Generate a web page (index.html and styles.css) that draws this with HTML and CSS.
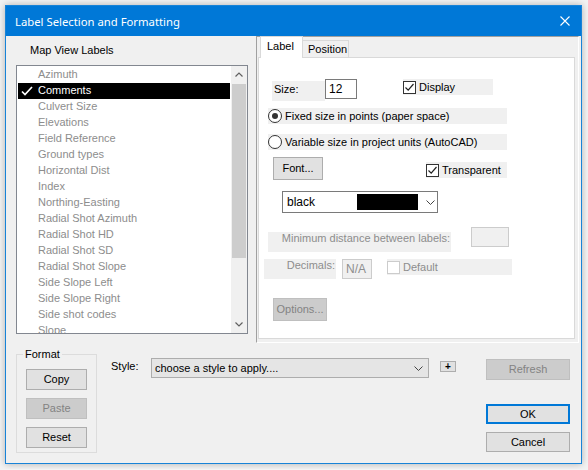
FILE: index.html
```html
<!DOCTYPE html>
<html lang="en">
<head>
  <meta charset="UTF-8">
  <title>Label Selection and Formatting</title>
  <link rel="stylesheet" href="styles.css">
</head>
<body>

<div class="window">
  <div class="titlebar">
    <span class="title">Label Selection and Formatting</span>
    <svg class="close" width="10" height="10" viewBox="0 0 10 10"><path d="M0.5 0.5L9.5 9.5M9.5 0.5L0.5 9.5" stroke="#fff" stroke-width="1.1"/></svg>
  </div>

  <div class="client">
    <div class="top">
      <div class="labels-col">
        <div class="caption">Map View Labels</div>
        <div class="listbox">
          <div class="items">
            <div class="item">Azimuth</div>
            <div class="item selected">
              <svg class="tick" width="12" height="10" viewBox="0 0 12 10"><path d="M1 5.5L4 8.5L11 1" fill="none" stroke="#fff" stroke-width="1.7"/></svg>
              Comments
            </div>
            <div class="item">Culvert Size</div>
            <div class="item">Elevations</div>
            <div class="item">Field Reference</div>
            <div class="item">Ground types</div>
            <div class="item">Horizontal Dist</div>
            <div class="item">Index</div>
            <div class="item">Northing-Easting</div>
            <div class="item">Radial Shot Azimuth</div>
            <div class="item">Radial Shot HD</div>
            <div class="item">Radial Shot SD</div>
            <div class="item">Radial Shot Slope</div>
            <div class="item">Side Slope Left</div>
            <div class="item">Side Slope Right</div>
            <div class="item">Side shot codes</div>
            <div class="item">Slope</div>
          </div>
          <div class="vscroll">
            <div class="arrow">
              <svg width="8" height="5" viewBox="0 0 8 5"><path d="M0.5 4.5L4 1L7.5 4.5" fill="none" stroke="#606060" stroke-width="1.2"/></svg>
            </div>
            <div class="track"><div class="thumb"></div></div>
            <div class="arrow">
              <svg width="8" height="5" viewBox="0 0 8 5"><path d="M0.5 0.5L4 4L7.5 0.5" fill="none" stroke="#606060" stroke-width="1.2"/></svg>
            </div>
          </div>
        </div>
      </div>

      <div class="tabpanel">
        <div class="tabs">
          <div class="tab active">Label</div>
          <div class="tab">Position</div>
        </div>
        <div class="page">
          <div class="row row-size">
            <div class="lbl size-lbl">Size:</div>
            <div class="textbox size-box">12</div>
            <div class="chk display-chk">
              <span class="box"><svg width="11" height="11" viewBox="0 0 11 11"><path d="M1.5 5.5L4.2 8.2L9.5 2" fill="none" stroke="#222" stroke-width="1.2"/></svg></span>
              Display
            </div>
          </div>
          <div class="row">
            <div class="radio-row"><span class="radio on"></span>Fixed size in points (paper space)</div>
          </div>
          <div class="row row-radio2">
            <div class="radio-row"><span class="radio"></span>Variable size in project units (AutoCAD)</div>
          </div>
          <div class="row row-font">
            <div class="btn font-btn">Font...</div>
            <div class="chk transparent-chk">
              <span class="box"><svg width="11" height="11" viewBox="0 0 11 11"><path d="M1.5 5.5L4.2 8.2L9.5 2" fill="none" stroke="#222" stroke-width="1.2"/></svg></span>
              Transparent
            </div>
          </div>
          <div class="row row-color">
            <div class="combo color-combo">
              <span class="color-name">black</span>
              <span class="swatch"></span>
              <svg class="chev" width="9" height="5" viewBox="0 0 9 5"><path d="M0.5 0.5L4.5 4.5L8.5 0.5" fill="none" stroke="#444" stroke-width="1"/></svg>
            </div>
          </div>
          <div class="row row-dist">
            <div class="lbl off dist-lbl">Minimum distance between labels:</div>
            <div class="textbox off dist-box"></div>
          </div>
          <div class="row row-dec">
            <div class="lbl off dec-lbl">Decimals:</div>
            <div class="textbox off na-box">N/A</div>
            <div class="chk off default-chk"><span class="box"></span>Default</div>
          </div>
          <div class="row row-options">
            <div class="btn disabled options-btn">Options...</div>
          </div>
        </div>
      </div>
    </div>

    <div class="bottom">
      <fieldset class="format">
        <legend>Format</legend>
        <div class="btn">Copy</div>
        <div class="btn disabled">Paste</div>
        <div class="btn">Reset</div>
      </fieldset>

      <div class="style-row">
        <div class="style-lbl">Style:</div>
        <div class="combo style-combo">
          <span>choose a style to apply....</span>
          <svg class="chev" width="9" height="5" viewBox="0 0 9 5"><path d="M0.5 0.5L4.5 4.5L8.5 0.5" fill="none" stroke="#444" stroke-width="1"/></svg>
        </div>
        <div class="plus-btn">+</div>
      </div>

      <div class="actions">
        <div class="btn disabled refresh-btn">Refresh</div>
        <div class="btn default ok-btn">OK</div>
        <div class="btn cancel-btn">Cancel</div>
      </div>
    </div>
  </div>
</div>

</body>
</html>
```

FILE: styles.css
```css
body {
  margin: 0;
  padding: 5px;
  background-color: #f3f3f3;
  font-family: "Liberation Sans", Arial, sans-serif;
  font-size: 11px;
  line-height: 13px;
  color: #000;
}

.window {
  width: 577px;
  height: 459px;
  box-sizing: border-box;
  border: 1px solid #1883d7;
  background-color: #f0f0f0;
  box-shadow: 0 0 7px rgba(0, 0, 0, 0.28);
  display: flex;
  flex-direction: column;
}

.titlebar {
  height: 30px;
  flex: none;
  background-color: #0078d7;
  color: #fff;
  display: flex;
  align-items: center;
  justify-content: space-between;
  padding: 0 10px 0 9px;
}

.title {
  font-family: "Noto Sans", sans-serif;
  font-size: 11.3px;
  line-height: 16px;
  margin-top: 1px;
}

.close {
  margin-right: 1px;
}

.client {
  flex: 1;
  display: flex;
  flex-direction: column;
}

/* ---- top half ---- */

.top {
  display: flex;
  height: 307px;
}

.labels-col {
  margin-left: 10px;
  width: 232px;
}

.caption {
  margin-top: 8px;
  padding-left: 14px;
}

.listbox {
  margin-top: 8px;
  height: 269px;
  box-sizing: border-box;
  border: 1px solid #828790;
  background-color: #fff;
  display: flex;
  overflow: hidden;
}

.items {
  flex: 1;
  padding: 1px 0 0 1px;
}

.item {
  height: 16px;
  line-height: 15px;
  padding-left: 20px;
  color: #8d8d8d;
  white-space: nowrap;
  position: relative;
}

.item.selected {
  background-color: #000;
  color: #fff;
}

.tick {
  position: absolute;
  left: 3px;
  top: 3px;
}

.vscroll {
  width: 16px;
  margin-left: 1px;
  background-color: #f0f0f0;
  display: flex;
  flex-direction: column;
}

.arrow {
  height: 17px;
  display: flex;
  align-items: center;
  justify-content: center;
}

.track {
  flex: 1;
  padding: 1px 1px;
}

.thumb {
  height: 174px;
  background-color: #cdcdcd;
}

.tabpanel {
  margin-left: 8px;
  width: 323px;
  box-sizing: border-box;
  border-top: 1px solid #a0a0a0;
  border-left: 1px solid #a0a0a0;
  border-right: 1px solid #fff;
  border-bottom: 1px solid #fff;
  display: flex;
  flex-direction: column;
}

.tabs {
  display: flex;
  align-items: flex-end;
  height: 21px;
  padding-left: 3px;
  margin-bottom: -1px;
}

.tab {
  width: 47px;
  height: 18px;
  box-sizing: border-box;
  padding: 2px 0 0 5px;
  border: 1px solid #d9d9d9;
  border-bottom: none;
  background-color: #f0f0f0;
}

.tab.active {
  width: 43px;
  height: 22px;
  padding: 3px 0 0 6px;
  background-color: #fff;
  position: relative;
  z-index: 1;
}

.tab + .tab {
  margin-left: -1px;
}

.page {
  margin: 0 3px 3px 1px;
  height: 282px;
  box-sizing: border-box;
  border: 1px solid #d9d9d9;
  background-color: #fff;
}

.row {
  display: flex;
  align-items: flex-start;
}

.lbl {
  height: 20px;
  box-sizing: border-box;
  background-color: #f0f0f0;
}

.off {
  color: #8d8d8d;
}

.textbox {
  height: 20px;
  box-sizing: border-box;
  border: 1px solid #7a7a7a;
  background-color: #fff;
  padding: 2px 3px 0;
  font-size: 12px;
  line-height: 15px;
}

.textbox.off {
  border-color: #cccccc;
  background-color: #f0f0f0;
}

.chk {
  height: 16px;
  display: flex;
  align-items: center;
  background-color: #f0f0f0;
}

.box {
  width: 13px;
  height: 13px;
  box-sizing: border-box;
  border: 1px solid #333;
  background-color: #fff;
  margin-right: 3px;
  display: flex;
  align-items: center;
  justify-content: center;
}

.chk.off .box {
  border-color: #cccccc;
}

.row-size {
  margin-top: 21px;
}

.size-lbl {
  margin: 2px 0 0 13px;
  width: 53px;
  padding: 2px 0 0 2px;
}

.size-box {
  width: 32px;
}

.display-chk {
  margin-left: 46px;
  width: 90px;
}

.radio-row {
  margin: 7px 0 0 9px;
  width: 239px;
  height: 16px;
  display: flex;
  align-items: center;
  background-color: #f0f0f0;
}

.row-radio2 .radio-row {
  margin-top: 10px;
}

.radio {
  width: 14px;
  height: 14px;
  box-sizing: border-box;
  border: 1px solid #333;
  border-radius: 50%;
  background-color: #fff;
  margin-right: 3px;
  display: flex;
  align-items: center;
  justify-content: center;
}

.radio.on::after {
  content: "";
  width: 6px;
  height: 6px;
  border-radius: 50%;
  background-color: #333;
}

.btn {
  height: 21px;
  box-sizing: border-box;
  border: 1px solid #adadad;
  background-color: #e1e1e1;
  display: flex;
  align-items: center;
  justify-content: center;
}

.btn.disabled {
  background-color: #cccccc;
  border-color: #bfbfbf;
  color: #838383;
}

.btn.default {
  border: 2px solid #0078d7;
}

.row-font {
  margin-top: 7px;
}

.font-btn {
  margin-left: 14px;
  width: 50px;
  height: 23px;
}

.transparent-chk {
  margin: 5px 0 0 103px;
  width: 81px;
}

.combo {
  box-sizing: border-box;
  border: 1px solid #7a7a7a;
  background-color: #fff;
  display: flex;
  align-items: center;
}

.color-combo {
  margin: 11px 0 0 23px;
  width: 156px;
  height: 22px;
  padding-left: 4px;
  font-size: 12px;
}

.color-name {
  width: 70px;
}

.swatch {
  width: 61px;
  height: 16px;
  background-color: #000;
}

.color-combo .chev {
  margin-left: 8px;
}

.row-dist {
  margin-top: 14px;
}

.dist-lbl {
  margin: 5px 0 0 9px;
  width: 183px;
  text-align: right;
  padding-right: 1px;
}

.dist-box {
  margin-left: 20px;
  width: 38px;
}

.row-dec {
  margin-top: 7px;
}

.dec-lbl {
  margin-left: 5px;
  width: 72px;
  text-align: right;
  padding-right: 1px;
}

.na-box {
  margin-left: 6px;
  width: 30px;
}

.default-chk {
  margin-left: 15px;
  width: 125px;
}

.default-chk .box {
  background-color: #fff;
}

.row-options {
  margin-top: 19px;
}

.options-btn {
  margin-left: 14px;
  width: 54px;
  height: 23px;
}

/* ---- bottom half ---- */

.bottom {
  display: flex;
  align-items: flex-start;
}

.format {
  margin: 5px 0 0 10px;
  width: 81px;
  box-sizing: border-box;
  padding: 8px 0 4px 9px;
  border: 1px solid #dcdcdc;
  min-width: 0;
}

.format legend {
  margin-left: -3px;
  padding: 0 2px;
}

.format .btn {
  width: 61px;
}

.format .btn + .btn {
  margin-top: 8px;
}

.style-row {
  margin: 15px 0 0 14px;
  display: flex;
  align-items: flex-start;
}

.style-lbl {
  width: 40px;
  padding-top: 2px;
}

.style-combo {
  width: 278px;
  height: 20px;
  padding: 0 5px 0 3px;
  border-color: #adadad;
  background-color: #e5e5e5;
  justify-content: space-between;
}

.plus-btn {
  margin: 3px 0 0 11px;
  width: 16px;
  height: 11px;
  box-sizing: border-box;
  border: 1px solid #adadad;
  background-color: #e1e1e1;
  font-weight: bold;
  font-size: 10px;
  line-height: 9px;
  text-align: center;
}

.actions {
  margin: 16px 11px 0 auto;
  width: 84px;
}

.ok-btn {
  margin-top: 24px;
  height: 20px;
}

.cancel-btn {
  margin-top: 8px;
  height: 20px;
}
```
